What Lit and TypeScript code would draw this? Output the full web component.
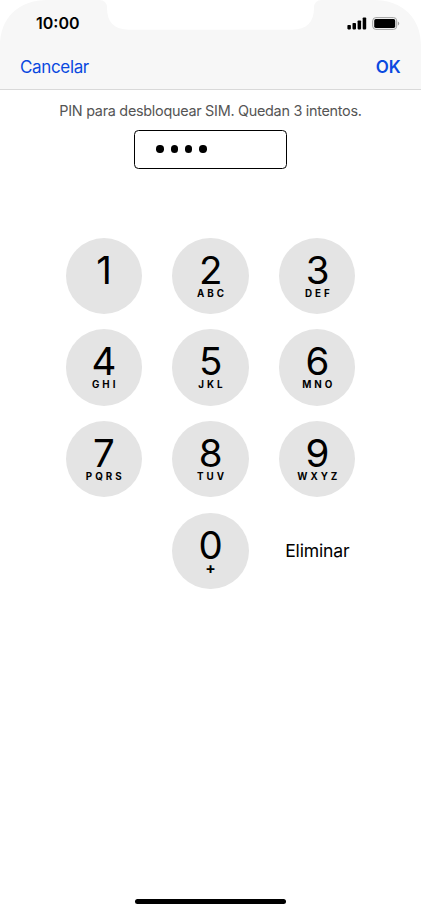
import { LitElement, html, css, svg } from 'lit';
import { customElement, property } from 'lit/decorators.js';

const KEYS = [
  ['1', ''],
  ['2', 'ABC'],
  ['3', 'DEF'],
  ['4', 'GHI'],
  ['5', 'JKL'],
  ['6', 'MNO'],
  ['7', 'PQRS'],
  ['8', 'TUV'],
  ['9', 'WXYZ'],
  ['0', '+'],
];

@customElement('pin-key')
export class PinKey extends LitElement {
  @property() digit = '';
  @property() letters = '';

  static styles = css`
    :host {
      display: block;
    }

    .key {
      display: flex;
      flex-direction: column;
      align-items: center;
      box-sizing: border-box;
      width: 76.4px;
      height: 76.4px;
      padding: 14px 0 0;
      border: 0;
      border-radius: 50%;
      background: #e4e4e4;
      color: #000;
      font-family: Inter, 'Liberation Sans', sans-serif;
    }

    .digit {
      font-size: 38.5px;
      line-height: 36px;
      font-weight: 400;
      letter-spacing: -0.5px;
    }

    .letters {
      font-size: 9.8px;
      line-height: 12px;
      font-weight: 700;
      letter-spacing: 3px;
      margin-right: -3px;
    }

    .letters.plus {
      font-size: 15.5px;
      line-height: 12px;
      letter-spacing: 0;
      margin-right: 0;
    }
  `;

  render() {
    return html`
      <button class="key">
        <span class="digit">${this.digit}</span>
        <span class="letters ${this.letters === '+' ? 'plus' : ''}">${this.letters}</span>
      </button>
    `;
  }
}

@customElement('app-root')
export class AppRoot extends LitElement {
  @property({ type: Number }) entered = 4;

  static styles = css`
    :host {
      display: flex;
      flex-direction: column;
      align-items: center;
      box-sizing: border-box;
      position: relative;
      width: 421px;
      height: 912px;
      overflow: hidden;
      background: #fff;
      color: #000;
      font-family: Inter, 'Liberation Sans', sans-serif;
    }

    header {
      position: relative;
      box-sizing: border-box;
      width: 100%;
      height: 90px;
      border-bottom: 1px solid #d9d9d9;
    }

    /* Header background, cut out around the notch */
    .backdrop {
      position: absolute;
      top: 0;
      left: 0;
    }

    .status,
    .nav {
      position: relative;
      display: flex;
      justify-content: space-between;
      align-items: center;
    }

    .status {
      height: 46px;
      padding: 0 21px 0 36px;
    }

    .time {
      font-size: 16px;
      font-weight: 600;
    }

    .indicators {
      display: flex;
      gap: 5px;
    }

    .nav {
      height: 42px;
      padding: 0 20.5px 0 20px;
      font-size: 17px;
      color: #0a49e0;
    }

    .cancel {
      letter-spacing: -0.35px;
    }

    .ok {
      font-weight: 600;
      letter-spacing: -0.1px;
    }

    .message {
      margin: 11px 0 0;
      font-size: 14.4px;
      line-height: 20px;
      letter-spacing: -0.28px;
      color: #555;
    }

    .pin {
      display: flex;
      align-items: center;
      gap: 7px;
      box-sizing: border-box;
      width: 153px;
      height: 39px;
      margin-top: 9px;
      padding: 0 0 1px 21.3px;
      border: 1px solid #000;
      border-radius: 4.5px;
    }

    .dot {
      width: 7.4px;
      height: 7.4px;
      border-radius: 50%;
      background: #000;
    }

    .keypad {
      display: grid;
      grid-template-columns: repeat(3, 76.4px);
      gap: 15.3px 30.4px;
      margin-top: 68.5px;
    }

    .zero {
      grid-column: 2;
    }

    .delete {
      align-self: center;
      justify-self: center;
      font-size: 17.6px;
      letter-spacing: -0.2px;
    }

    .home {
      width: 151px;
      height: 5px;
      margin: auto 0 8px;
      border-radius: 3px;
      background: #000;
    }
  `;

  render() {
    return html`
      <header>
        <svg class="backdrop" width="421" height="89" viewBox="0 0 421 89">
          <path
            fill="#f7f7f7"
            d="M0 89V46C0 18 18 0 48 0H99Q107 0 107 8C107 22 114 29.7 129 29.7H292C307 29.7 314 22 314 8Q314 0 322 0H373C403 0 421 18 421 46V89Z"
          />
        </svg>
        <div class="status">
          <span class="time">10:00</span>
          <div class="indicators">${this.renderSignal()} ${this.renderBattery()}</div>
        </div>
        <div class="nav">
          <span class="cancel">Cancelar</span>
          <span class="ok">OK</span>
        </div>
      </header>

      <p class="message">PIN para desbloquear SIM. Quedan 3 intentos.</p>
      <div class="pin">
        ${Array.from({ length: this.entered }, () => html`<span class="dot"></span>`)}
      </div>

      <div class="keypad">
        ${KEYS.map(
          ([digit, letters]) => html`
            <pin-key
              class=${digit === '0' ? 'zero' : ''}
              .digit=${digit}
              .letters=${letters}
            ></pin-key>
          `
        )}
        <span class="delete">Eliminar</span>
      </div>

      <div class="home"></div>
    `;
  }

  renderSignal() {
    const bars = [4.5, 6.5, 9, 12];
    return html`
      <svg width="20" height="13" viewBox="0 0 20 13">
        ${bars.map(
          (h, i) => svg`<rect x=${0.4 + i * 5.1} y=${12.4 - h} width="3.5" height=${h} rx="0.8" />`
        )}
      </svg>
    `;
  }

  renderBattery() {
    return html`
      <svg width="28" height="13" viewBox="0 0 28 13">
        <rect x="0.7" y="0.6" width="24" height="11.8" rx="3.2" fill="none" stroke="#a0a0a0" />
        <rect x="2.2" y="2.1" width="21" height="8.8" rx="1.6" />
        <path d="M25.9 4.5Q27.2 5 27.2 6.5T25.9 8.5Z" fill="#a0a0a0" />
      </svg>
    `;
  }
}
